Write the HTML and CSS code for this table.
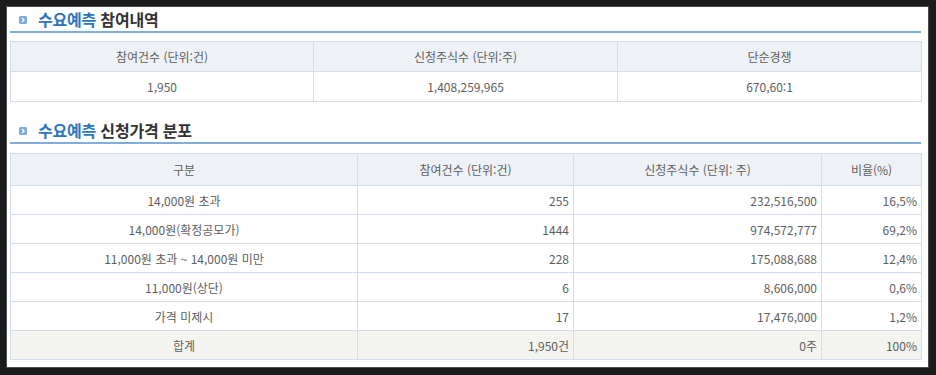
FILE: index.html
```html
<!DOCTYPE html>
<html lang="ko">
<head>
<meta charset="utf-8">
<link rel="stylesheet" href="styles.css">
</head>
<body>
<div class="page">
  <h2 class="sec-title first">
    <span class="bullet"><svg width="8" height="8" viewBox="0 0 8 8"><rect width="8" height="8" rx="1.5" fill="#7eaadb"/><path d="M3 2 L5 4 L3 6" fill="none" stroke="#fff" stroke-width="1.3"/></svg></span>
    <span class="hl">수요예측</span>&nbsp;참여내역
  </h2>
  <table class="grid t1">
    <colgroup><col class="c1a"><col class="c1b"><col class="c1c"></colgroup>
    <thead>
      <tr><th>참여건수 (단위:건)</th><th>신청주식수 (단위:주)</th><th>단순경쟁</th></tr>
    </thead>
    <tbody>
      <tr><td class="ctr">1,950</td><td class="ctr">1,408,259,965</td><td class="ctr">670,60:1</td></tr>
    </tbody>
  </table>

  <h2 class="sec-title second">
    <span class="bullet"><svg width="8" height="8" viewBox="0 0 8 8"><rect width="8" height="8" rx="1.5" fill="#7eaadb"/><path d="M3 2 L5 4 L3 6" fill="none" stroke="#fff" stroke-width="1.3"/></svg></span>
    <span class="hl">수요예측</span>&nbsp;신청가격 분포
  </h2>
  <table class="grid t2">
    <colgroup><col class="c2a"><col class="c2b"><col class="c2c"><col class="c2d"></colgroup>
    <thead>
      <tr><th>구분</th><th>참여건수 (단위:건)</th><th>신청주식수 (단위: 주)</th><th>비율(%)</th></tr>
    </thead>
    <tbody>
      <tr><td class="ctr">14,000원 초과</td><td class="num">255</td><td class="num">232,516,500</td><td class="num">16,5%</td></tr>
      <tr><td class="ctr">14,000원(확정공모가)</td><td class="num">1444</td><td class="num">974,572,777</td><td class="num">69,2%</td></tr>
      <tr><td class="ctr">11,000원 초과 ~ 14,000원 미만</td><td class="num">228</td><td class="num">175,088,688</td><td class="num">12,4%</td></tr>
      <tr><td class="ctr">11,000원(상단)</td><td class="num">6</td><td class="num">8,606,000</td><td class="num">0,6%</td></tr>
      <tr><td class="ctr">가격 미제시</td><td class="num">17</td><td class="num">17,476,000</td><td class="num">1,2%</td></tr>
      <tr class="total"><td class="ctr">합계</td><td class="num">1,950건</td><td class="num">0주</td><td class="num">100%</td></tr>
    </tbody>
  </table>
</div>
</body>
</html>
```

FILE: styles.css
```css
html, body {
  margin: 0;
  padding: 0;
  background: #1b1b1b;
}
body {
  width: 936px;
  height: 375px;
  overflow: hidden;
  font-family: "Noto Sans CJK KR", "Noto Sans", sans-serif;
}
.page {
  margin: 6px 7px 0 6px;
  height: 360px;
  border: 1px solid #4d4d4d;
  background: #fff;
  padding: 0 7px 0 3px;
}
.sec-title {
  margin: 0;
  height: 24px;
  display: flex;
  align-items: center;
  border-bottom: 2px solid #7eaee0;
  font-size: 16px;
  font-weight: bold;
  color: #333;
  letter-spacing: -0.2px;
}
.sec-title.second {
  margin-top: 16px;
}
.bullet {
  display: inline-flex;
  margin: 1px 11px 0 9px;
}
.hl {
  color: #2e75bd;
}
.grid {
  width: 911px;
  border-collapse: collapse;
  table-layout: fixed;
  font-size: 12px;
  color: #5e5e5e;
}
.t1 { margin-top: 8px; }
.t2 { margin-top: 9px; }
.c1a { width: 303px; }
.c1b { width: 304px; }
.c1c { width: 304px; }
.c2a { width: 347px; }
.c2b { width: 216px; }
.c2c { width: 248px; }
.c2d { width: 100px; }
.grid th,
.grid td {
  border: 1px solid #d2dde9;
  padding: 0 4px;
  font-weight: normal;
  white-space: nowrap;
}
.grid th {
  background: #eef2f6;
  text-align: center;
}
.t1 th, .t1 td { height: 29px; }
.t2 th { height: 31px; }
.t2 td { height: 28px; }
.ctr { text-align: center; }
.num { text-align: right; }
.total td {
  background: #f3f3ef;
}
```
